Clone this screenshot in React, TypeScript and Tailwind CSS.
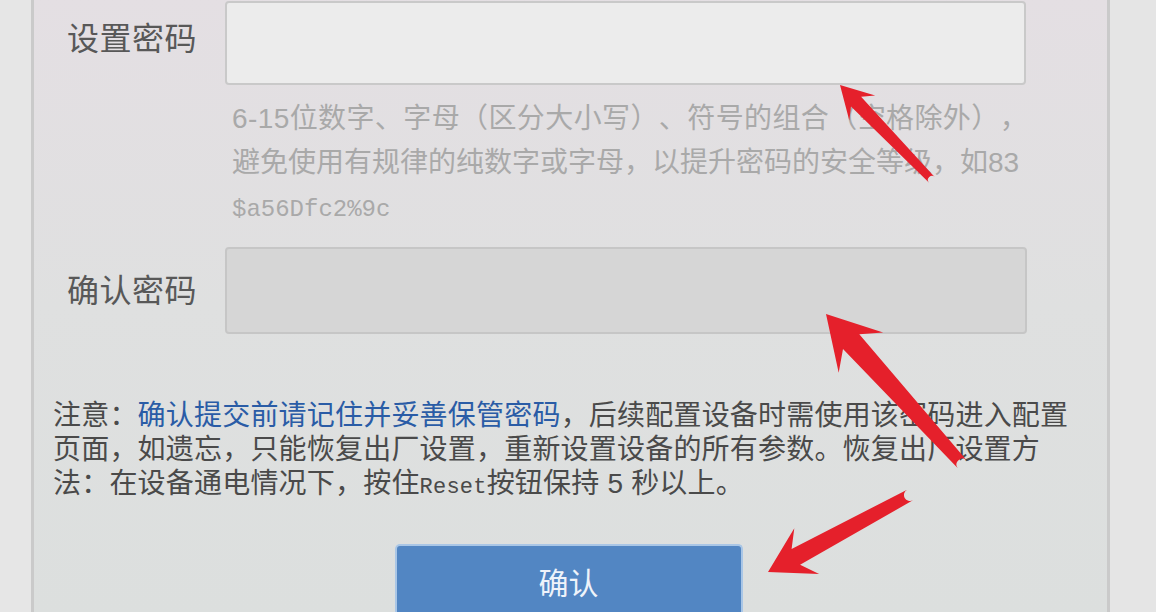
import React from 'react';

type Pt = [number, number];

// tapered red arrow: tip, tail, head length, head half width, neck half width, tail half width
function arrowPath(tip: Pt, tail: Pt, headLen: number, headHalf: number, neckHalf: number, tailHalf: number) {
  const dx = tail[0] - tip[0];
  const dy = tail[1] - tip[1];
  const len = Math.hypot(dx, dy);
  const u: Pt = [dx / len, dy / len];
  const n: Pt = [-u[1], u[0]];
  const at = (d: number, s: number): string =>
    `${(tip[0] + u[0] * d + n[0] * s).toFixed(1)} ${(tip[1] + u[1] * d + n[1] * s).toFixed(1)}`;
  const tA = `${(tail[0] + n[0] * tailHalf).toFixed(1)} ${(tail[1] + n[1] * tailHalf).toFixed(1)}`;
  const tB = `${(tail[0] - n[0] * tailHalf).toFixed(1)} ${(tail[1] - n[1] * tailHalf).toFixed(1)}`;
  return [
    `M ${tip[0]} ${tip[1]}`,
    `L ${at(headLen, headHalf)}`,
    `L ${at(headLen * 0.72, neckHalf)}`,
    `L ${tA}`,
    `A ${tailHalf} ${tailHalf} 0 0 1 ${tB}`,
    `L ${at(headLen * 0.72, -neckHalf)}`,
    `L ${at(headLen, -headHalf)}`,
    'Z',
  ].join(' ');
}

const arrows = [
  arrowPath([840, 85], [932, 180], 32, 18, 7, 4),
  arrowPath([826, 314], [962, 464], 52, 30, 11, 6),
  arrowPath([768, 572], [910, 495], 44, 26, 9, 6),
];

export default function App() {
  return (
    <div className="relative w-[1156px] h-[612px] overflow-hidden flex bg-[#e5e5e5] font-['Liberation_Sans','Noto_Sans_CJK_SC',sans-serif] [text-spacing-trim:space-all]">
      {/* left outer strip */}
      <div className="w-[31px] shrink-0 bg-[#e6e6e6]" />

      <div className="flex-1 flex flex-col">
        <div className="h-[3px] ml-[2px] bg-[#2b2b2b]" />
        <div className="flex-1 flex">
          {/* panel */}
          <div className="w-[1079px] shrink-0 flex flex-col border-l-[3px] border-r-[3px] border-[#cacaca] bg-linear-to-b from-[#e4dfe3] via-[#dfe0e0] to-[#dcdfde]">
            {/* row: set password */}
            <div className="flex">
              <div className="w-[191px] shrink-0 pr-[28px] mt-[19px] text-right text-[32px] leading-[40px] tracking-[0.5px] text-[#585858]">
                设置密码
              </div>
              <div className="w-[801px]">
                <div className="h-[84px] mt-[1px] rounded-[4px] border-2 border-[#c9c9c9] bg-[#ececec]" />
                <p className="mt-[12px] pl-[7px] text-[28px] leading-[44px] text-[#a9a9a9] whitespace-nowrap">
                  <span className="tracking-[0.4px]">6-15位数字、字母（区分大小写）、符号的组合（空格除外），</span>
                  <br />
                  避免使用有规律的纯数字或字母，以提升密码的安全等级，如83
                  <br />
                  <span className="font-['Liberation_Mono',monospace] text-[24px]">$a56Dfc2%9c</span>
                </p>
              </div>
            </div>

            {/* row: confirm password */}
            <div className="flex items-center mt-[15px]">
              <div className="w-[191px] shrink-0 pr-[28px] text-right text-[32px] leading-[40px] tracking-[0.5px] text-[#585858]">
                确认密码
              </div>
              <div className="w-[802px] h-[87px] rounded-[4px] border-2 border-[#c6c6c6] bg-[#d6d6d6]" />
            </div>

            {/* note */}
            <p className="mt-[65px] pl-[19px] text-[28px] leading-[34px] tracking-[0.2px] text-[#4a4a4a] whitespace-nowrap">
              注意：<span className="text-[#2a5ca6]">确认提交前请记住并妥善保管密码</span>，后续配置设备时需使用该密码进入配置
              <br />
              页面，如遗忘，只能恢复出厂设置，重新设置设备的所有参数。恢复出厂设置方
              <br />
              法：在设备通电情况下，按住<span className="font-['Liberation_Mono',monospace] text-[22px]">Reset</span>按钮保持 5 秒以上。
            </p>

            {/* submit */}
            <div className="flex justify-center mt-[39px]">
              <button className="w-[348px] h-[76px] shrink-0 -translate-x-[2px] rounded-t-[5px] border-2 border-b-0 border-[#a9c6e6] bg-[#5286c3] text-[30px] text-[#eef3fa]">
                确认
              </button>
            </div>
          </div>

          {/* right outer strip */}
          <div className="flex-1 bg-[#e5e5e5]" />
        </div>
      </div>

      {/* red annotation arrows */}
      <svg className="absolute inset-0 pointer-events-none" width="1156" height="612" viewBox="0 0 1156 612">
        {arrows.map((d, i) => (
          <path key={i} d={d} fill="#e5202b" />
        ))}
      </svg>
    </div>
  );
}
